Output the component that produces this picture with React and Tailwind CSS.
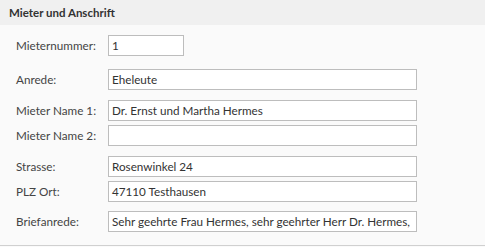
const rows = [
  { label: "Mieternummer:", value: "1", w: "w-[76px]", mt: "mt-0" },
  { label: "Anrede:", value: "Eheleute", w: "w-[309px]", mt: "mt-[13px]" },
  { label: "Mieter Name 1:", value: "Dr. Ernst und Martha Hermes", w: "w-[309px]", mt: "mt-[10px]" },
  { label: "Mieter Name 2:", value: "", w: "w-[309px]", mt: "mt-[4px]" },
  { label: "Strasse:", value: "Rosenwinkel 24", w: "w-[309px]", mt: "mt-[10px]" },
  { label: "PLZ Ort:", value: "47110 Testhausen", w: "w-[309px]", mt: "mt-[4px]" },
  { label: "Briefanrede:", value: "Sehr geehrte Frau Hermes, sehr geehrter Herr Dr. Hermes,", w: "w-[309px]", mt: "mt-[9px]" },
];

function Field({ label, value, w, mt }) {
  return (
    <div className={`flex items-center ${mt}`}>
      <span className="w-[92px] text-[11.7px] text-[#444]">{label}</span>
      <div className={`${w} h-[21px] bg-white border border-[#bdbdbd] px-[3px] flex items-center text-[11.7px] text-[#333] whitespace-nowrap overflow-hidden`}>
        {value}
      </div>
    </div>
  );
}

export default function App() {
  return (
    <div className="w-[485px] h-[247px] bg-[#fafafa] flex flex-col" style={{ fontFamily: '"Segoe UI", Lato, sans-serif' }}>
      <header className="h-[25px] bg-[#f0f0f0] px-[9px] flex items-center shrink-0">
        <h1 className="text-[11.5px] font-bold text-[#333]">Mieter und Anschrift</h1>
      </header>
      <div className="flex-1 flex flex-col pl-[16px] pt-[10px]">
        {rows.map((r) => (
          <Field key={r.label} {...r} />
        ))}
      </div>
      <div className="h-px bg-[#d0d0d0] mb-px" />
    </div>
  );
}
